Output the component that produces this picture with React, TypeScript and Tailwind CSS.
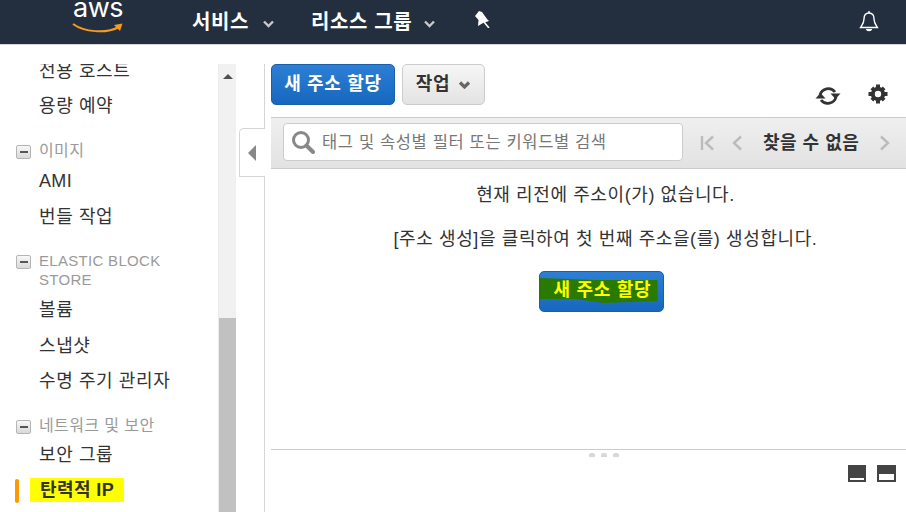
import React from "react";

function Chevron({ className, heavy = false }: { className: string; heavy?: boolean }) {
  return (
    <svg viewBox="0 0 12 8" className={className}>
      <path d="M1.5 1.5 L6 6 L10.5 1.5" fill="none" stroke="currentColor" strokeWidth={heavy ? 3.2 : 2.4} />
    </svg>
  );
}

function GroupIcon() {
  return (
    <span className="flex h-[14px] w-[15px] shrink-0 items-center justify-center rounded-[2px] border border-[#b5b5b5] bg-[linear-gradient(#f8f8f8,#d8d8d8)]">
      <span className="h-[2px] w-[8px] bg-[#555]" />
    </span>
  );
}

function Item({ children, className = "" }: { children: React.ReactNode; className?: string }) {
  return <div className={"pl-[39px] text-[18px] leading-[24px] tracking-[0.6px] text-[#333] " + className}>{children}</div>;
}

function Group({ children, className = "", latin = false }: { children: React.ReactNode; className?: string; latin?: boolean }) {
  return (
    <div className={"flex items-start pl-[16px] " + className}>
      <span className="mt-[4px]"><GroupIcon /></span>
      <span className={"ml-[8px] leading-[19px] text-[#9a9a9a] " + (latin ? "text-[15px] tracking-[0.3px]" : "text-[16px] tracking-[0.4px]")}>{children}</span>
    </div>
  );
}

export default function App() {
  return (
    <div className="flex h-[512px] w-[906px] flex-col overflow-hidden bg-white font-['Liberation_Sans','Noto_Sans_CJK_KR',sans-serif]">
      <header className="flex h-[45px] shrink-0 items-center border-b border-[#d5d5d5] bg-[#232f3e] text-white">
        <div className="relative ml-[72px] h-[44px] w-[52px]">
          <span className="absolute left-[1px] top-0 font-['Inter','Liberation_Sans',sans-serif] text-[27px] font-normal leading-[16px] tracking-[-0.5px]">aws</span>
          <svg viewBox="0 0 52 12" className="absolute left-0 top-[22px] h-[12px] w-[52px]">
            <path d="M1 2 C12 10 34 12 47 5" fill="none" stroke="#f79a1d" strokeWidth="2" />
            <path d="M42 3 L50.5 1.5 L48 9 Z" fill="#f79a1d" />
          </svg>
        </div>
        <span className="ml-[68px] text-[20px] font-bold tracking-[0.6px]">서비스</span>
        <Chevron className="ml-[13px] mt-[4px] h-[8px] w-[13px] text-[#c8c8c8]" />
        <span className="ml-[36px] text-[20px] font-bold tracking-[0.6px]">리소스 그룹</span>
        <Chevron className="ml-[11px] mt-[4px] h-[8px] w-[13px] text-[#c8c8c8]" />
        <svg viewBox="0 0 16 18" className="ml-[38px] mt-[-7px] h-[18px] w-[16px]">
          <path d="M1 6 L5 1 L8 2 L13 9 L15 11 L9 13 L4 16 L4.5 10 Z" fill="#fff" />
          <path d="M10 12 L15 18" stroke="#fff" strokeWidth="1.6" />
        </svg>
        <svg viewBox="0 0 20 22" className="ml-auto mr-[27px] mt-[-2px] h-[22px] w-[20px]" fill="none" stroke="#fff" strokeWidth="1.4">
          <path d="M10 3 C6 3 5 6 5 9 C5 13 3 15 1.5 17.5 H18.5 C17 15 15 13 15 9 C15 6 14 3 10 3 Z" />
          <path d="M10 1 V3" />
          <path d="M7.5 19 C8 21 12 21 12.5 19" fill="#fff" />
        </svg>
      </header>

      <div className="flex min-h-0 flex-1 pt-[19px]">
        <aside className="w-[218px] shrink-0 overflow-hidden">
          <div className="mt-[-5px]">
            <Item>전용 호스트</Item>
            <Item className="mt-[11px]">용량 예약</Item>
            <Group className="mt-[23px]">이미지</Group>
            <Item className="mt-[9px] text-[17px] tracking-[0.35px]">AMI</Item>
            <Item className="mt-[12px]">번들 작업</Item>
            <Group latin className="mt-[22px]">ELASTIC BLOCK<br />STORE</Group>
            <Item className="mt-[9px]">볼륨</Item>
            <Item className="mt-[12px]">스냅샷</Item>
            <Item className="mt-[11px]">수명 주기 관리자</Item>
            <Group className="mt-[23px]">네트워크 및 보안</Group>
            <Item className="mt-[8px]">보안 그룹</Item>
            <div className="relative mt-[11px] flex items-center pl-[30px]">
              <span className="absolute left-[15px] top-[1px] h-[24px] w-[4px] rounded-[2px] bg-[#f90]" />
              <span className="flex h-[24px] w-[94px] items-center bg-[#ffff00] pl-[10px] text-[18px] font-bold tracking-[0.4px] text-[#333]">탄력적 IP</span>
            </div>
          </div>
        </aside>

        <div className="flex w-[18px] shrink-0 flex-col border-l border-[#ececec] bg-[#f1f1f1]">
          <div className="flex h-[24px] items-center justify-center">
            <span className="h-0 w-0 border-x-[5px] border-b-[5px] border-x-transparent border-b-[#505050]" />
          </div>
          <div className="h-[230px]" />
          <div className="flex-1 bg-[#c1c1c1]" />
        </div>

        <div className="relative w-[35px] shrink-0">
          <div className="absolute bottom-0 right-[6px] top-0 w-px bg-[#d5d5d5]" />
          <div className="absolute left-[3px] top-[64px] flex h-[49px] w-[26px] items-center justify-center rounded-tl-[5px] border-b border-l border-t border-[#d5d5d5] bg-white pr-[2px]">
            <span className="h-0 w-0 border-y-[8px] border-r-[8px] border-y-transparent border-r-[#888]" />
          </div>
        </div>

        <main className="flex min-w-0 flex-1 flex-col">
          <div className="flex h-[53px] shrink-0 items-start">
            <button className="h-[41px] w-[124px] rounded-[5px] border border-[#1b5fa8] bg-[linear-gradient(#2c7fd4,#1668bf)] text-[18px] font-bold tracking-[0.7px] text-white">새 주소 할당</button>
            <button className="ml-[7px] flex h-[41px] w-[83px] items-center justify-center rounded-[5px] border border-[#ccc] bg-[linear-gradient(#f6f6f6,#e3e3e3)] text-[18px] font-bold tracking-[0.7px] text-[#333]">
              작업
              <Chevron heavy className="ml-[8px] h-[8px] w-[13px] text-[#666]" />
            </button>
            <svg viewBox="0 0 26 22" className="ml-[330px] mt-[21px] h-[22px] w-[26px]" fill="none" stroke="#333" strokeWidth="2.8">
              <path d="M5 10 A8.5 8.5 0 0 1 20 7" />
              <path d="M21 12 A8.5 8.5 0 0 1 6 15" />
              <path d="M15.5 8.5 H25.5 L20.5 14 Z" fill="#333" stroke="none" />
              <path d="M0.5 13.5 H10.5 L5.5 8 Z" fill="#333" stroke="none" />
            </svg>
            <svg viewBox="0 0 20 20" className="ml-[27px] mt-[20px] h-[20px] w-[20px]">
              <circle cx="10" cy="10" r="5.2" fill="none" stroke="#333" strokeWidth="4" />
              <path d="M8 0.5 H12 V4 H8 Z M8 16 H12 V19.5 H8 Z M0.5 8 H4 V12 H0.5 Z M16 8 H19.5 V12 H16 Z M2.5 5.2 L5.2 2.5 L7.5 5 L5 7.5 Z M14.8 2.5 L17.5 5.2 L15 7.5 L12.5 5 Z M2.5 14.8 L5 12.5 L7.5 15 L5.2 17.5 Z M15 12.5 L17.5 14.8 L14.8 17.5 L12.5 15 Z" fill="#333" />
            </svg>
          </div>

          <div className="flex h-[52px] shrink-0 items-center border-y border-[#ccc] bg-[linear-gradient(#efefef,#e2e2e2)] pl-[12px]">
            <div className="mb-[3px] flex h-[38px] w-[400px] items-center rounded-[4px] border border-[#ccc] bg-white pl-[7px]">
              <svg viewBox="0 0 24 24" className="h-[24px] w-[24px] shrink-0" fill="none">
                <circle cx="10" cy="10" r="7.5" stroke="#888" strokeWidth="3" />
                <path d="M15.5 15.5 L22 22" stroke="#888" strokeWidth="4" strokeLinecap="round" />
              </svg>
              <span className="ml-[7px] mt-[1px] whitespace-nowrap text-[16.5px] tracking-[0.65px] text-[#777]">태그 및 속성별 필터 또는 키워드별 검색</span>
            </div>
            <svg viewBox="0 0 16 16" className="ml-[17px] h-[16px] w-[16px]" fill="none" stroke="#bbb" strokeWidth="2.4">
              <path d="M2 1 V15" />
              <path d="M13 1.5 L6 8 L13 14.5" />
            </svg>
            <svg viewBox="0 0 12 16" className="ml-[15px] h-[16px] w-[12px]" fill="none" stroke="#bbb" strokeWidth="2.4">
              <path d="M10 1.5 L3 8 L10 14.5" />
            </svg>
            <span className="ml-[20px] whitespace-nowrap text-[18px] font-bold tracking-[0.5px] text-[#333]">찾을 수 없음</span>
            <svg viewBox="0 0 12 16" className="ml-[20px] h-[16px] w-[12px]" fill="none" stroke="#bbb" strokeWidth="2.4">
              <path d="M2 1.5 L9 8 L2 14.5" />
            </svg>
          </div>

          <div className="flex h-[281px] shrink-0 flex-col items-center border-b border-[#ccc] pl-[34px] pt-[14px] text-[18px] tracking-[0.6px] text-[#333]">
            <p className="leading-[24px]">현재 리전에 주소이(가) 없습니다.</p>
            <p className="mt-[20px] leading-[24px]">[주소 생성]을 클릭하여 첫 번째 주소을(를) 생성합니다.</p>
            <button className="mr-[9px] mt-[20px] flex h-[41px] w-[125px] items-center justify-start rounded-[5px] border border-[#1b5fa8] bg-[linear-gradient(#2c7fd4,#1668bf)]">
              <span className="mt-[-2px] flex h-[25px] w-[118px] items-center bg-[#2b7a00] pl-[14px] text-[18px] font-bold tracking-[0.7px] text-[#ffff00] [clip-path:polygon(0_0,48%_8%,100%_8%,100%_92%,55%_100%,30%_84%,0_84%)]">새 주소 할당</span>
            </button>
          </div>

          <div className="flex flex-1 flex-col">
            <div className="flex h-[10px] items-center justify-center gap-[6px] pl-[30px]">
              <span className="h-[4px] w-[6px] rounded-t-[2px] bg-[#d8d8d8]" />
              <span className="h-[4px] w-[6px] rounded-t-[2px] bg-[#d8d8d8]" />
              <span className="h-[4px] w-[6px] rounded-t-[2px] bg-[#d8d8d8]" />
            </div>
            <div className="mt-[5px] flex justify-end gap-[11px] pr-[10px]">
              <div className="flex h-[17px] w-[18px] items-end justify-center bg-[#444] pb-[2px]">
                <span className="h-[2px] w-[14px] bg-white" />
              </div>
              <div className="flex h-[17px] w-[19px] items-end justify-center bg-[#444] pb-[2px]">
                <span className="h-[6px] w-[15px] bg-white" />
              </div>
            </div>
          </div>
        </main>
      </div>
    </div>
  );
}
